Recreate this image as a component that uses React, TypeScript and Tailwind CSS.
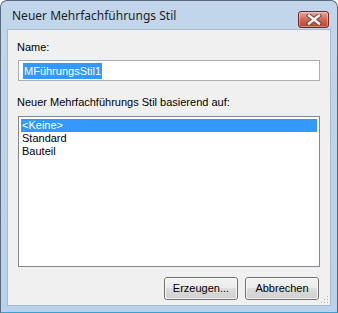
import React from 'react';

const ui = { fontFamily: '"Noto Sans", "Open Sans", sans-serif' };
const classic = { fontFamily: '"Liberation Sans", Arial, sans-serif' };

function CloseButton() {
    return (
        <div className="w-[31px] h-[17px] rounded-[3px] border border-[#6b2a26] bg-gradient-to-b from-[#e9a996] via-[#d2685a] to-[#c0402e] flex items-center justify-center shadow-[inset_0_0_0_1px_rgba(255,255,255,0.35)]">
            <svg width="16" height="11" viewBox="0 0 16 11">
                <path d="M3 1.5 L13 9.5 M13 1.5 L3 9.5" stroke="#6a4a4a" strokeWidth="4.4" strokeLinecap="square" />
                <path d="M3 1.5 L13 9.5 M13 1.5 L3 9.5" stroke="#f4f4f4" strokeWidth="2.4" strokeLinecap="square" />
            </svg>
        </div>
    );
}

function DialogButton({ label }: { label: string }) {
    return (
        <div className="w-[74px] h-[23px] rounded-[3px] border border-[#707070] bg-[linear-gradient(#f2f2f2_0%,#ebebeb_50%,#dddddd_50%,#cfcfcf_100%)]">
            <div className="w-full h-full rounded-[2px] border border-[#fbfbfb]/80 flex items-center justify-center text-[11px] text-black leading-none" style={classic}>
                {label}
            </div>
        </div>
    );
}

export default function App() {
    const items = ['<Keine>', 'Standard', 'Bauteil'];

    return (
        <div className="w-[338px] h-[313px] bg-white">
            <div className="w-full h-full rounded-t-[7px] border border-[#5b6a7c] border-b-[#3c9fcf] bg-gradient-to-b from-[#c2d6eb] to-[#b9d1ea] flex flex-col px-[6px] pb-[6px]">
                {/* title bar */}
                <div className="h-[28px] flex items-center justify-between pl-[5px] pr-[2px] pt-[1px]">
                    <span className="text-[12px] text-[#1e1e1e] leading-none" style={ui}>Neuer Mehrfachführungs Stil</span>
                    <div className="self-start mt-[9px]">
                        <CloseButton />
                    </div>
                </div>

                {/* client area */}
                <div className="relative flex-1 border border-[#a6bbd2] bg-[#f0f0f0] flex flex-col pl-[10px] pr-[8px] pt-[11px]" style={classic}>
                    <div className="text-[11px] text-black leading-[13px] -ml-px">Name:</div>
                    <div className="mt-[6px] w-[302px] h-[21px] border border-[#abadb3] bg-white flex items-center pl-[4px]">
                        <span className="bg-[#3399ff] text-white text-[11px] leading-[16px] px-px">MFührungsStil1</span>
                    </div>
                    <div className="mt-[15px] text-[11px] text-black leading-[13px] -ml-px">Neuer Mehrfachführungs Stil basierend auf:</div>
                    <div className="mt-[7px] w-[302px] h-[151px] border border-[#828790] bg-white p-[2px]">
                        {items.map((it, i) => (
                            <div key={it} className={`h-[13px] text-[11px] leading-[13px] pl-px ${i === 0 ? 'bg-[#3399ff] text-white' : 'text-black'}`}>
                                {it}
                            </div>
                        ))}
                    </div>
                    <div className="mt-[10px] w-[302px] flex justify-end gap-[7px] pr-px">
                        <DialogButton label="Erzeugen..." />
                        <DialogButton label="Abbrechen" />
                    </div>

                    {/* size grip */}
                    <svg className="absolute right-px bottom-px" width="9" height="9" viewBox="0 0 9 9">
                        {[[7, 1], [7, 4], [4, 4], [7, 7], [4, 7], [1, 7]].map(([x, y]) => (
                            <g key={`${x}-${y}`}>
                                <rect x={x} y={y} width="1" height="1" fill="#b8b8b8" />
                                <rect x={x + 1} y={y + 1} width="1" height="1" fill="#ffffff" />
                            </g>
                        ))}
                    </svg>
                </div>
            </div>
        </div>
    );
}
